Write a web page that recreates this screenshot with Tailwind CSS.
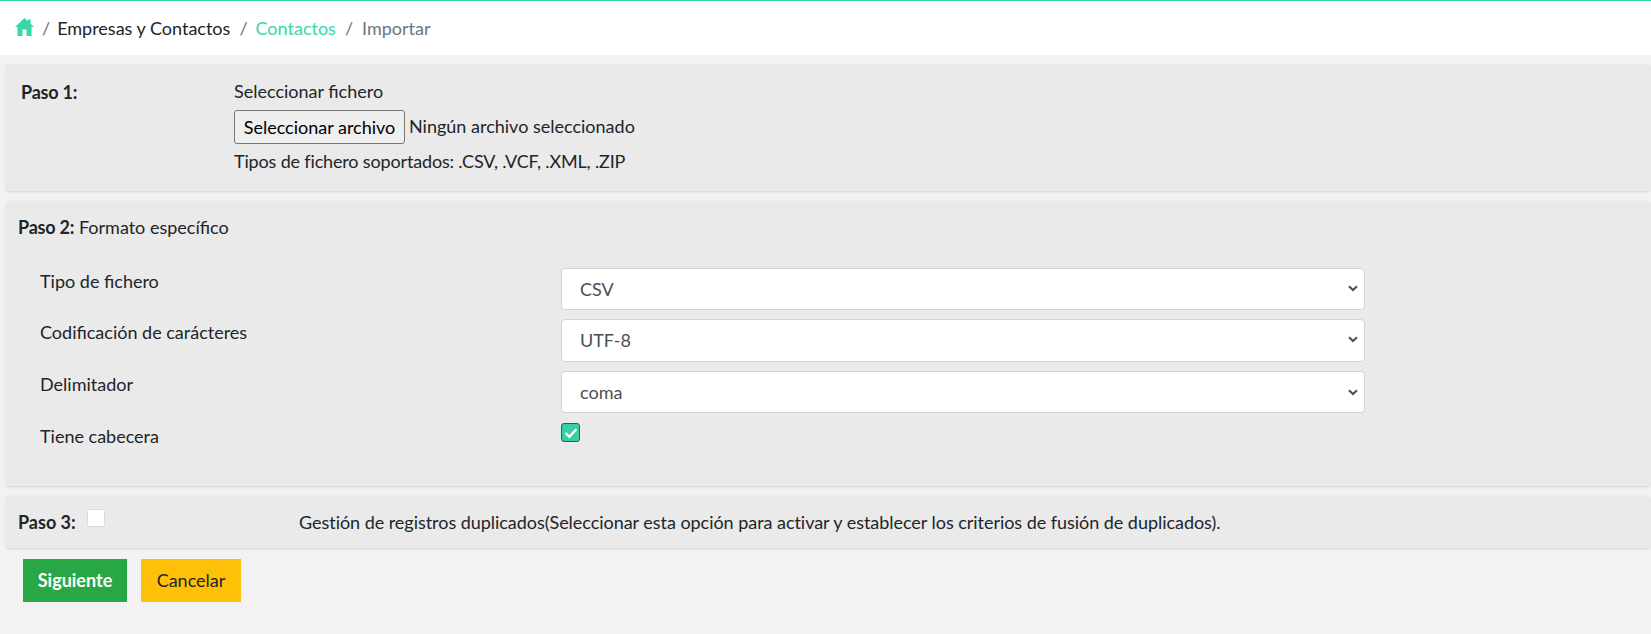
<!DOCTYPE html>
<html lang="es">
 <head>
  <meta charset="utf-8"/>
  <meta content="width=device-width, initial-scale=1.0" name="viewport"/>
  <title>Importar contactos</title>
  <script src="https://cdn.jsdelivr.net/npm/@tailwindcss/browser@4"></script>
 </head>
 <body class="font-['Lato',sans-serif] text-[18px] text-[#212529] bg-[#f2f2f2] h-[634px] overflow-hidden">
  <!-- breadcrumb -->
  <nav class="h-[55px] bg-white border-t border-[#38d6a9] flex items-center pl-[15px]">
   <svg class="w-[19px] h-[18px] text-[#38d6a9] -mt-[2px]" viewBox="0 0 19 18" fill="currentColor"><path d="M9.5 0 L13 3.2 V1.5 H15.5 V5.5 L19 9 H16.5 V18 H11.5 V11.5 H7.5 V18 H2.5 V9 H0 Z"/></svg>
   <span class="ml-[8px] mr-[8px] text-[#6c757d]">/</span>
   <a class="text-[#212529] -ml-[1px]">Empresas y Contactos</a>
   <span class="ml-[9px] mr-[8px] text-[#6c757d]">/</span>
   <a class="text-[#38d6a9]">Contactos</a>
   <span class="ml-[9px] mr-[9px] text-[#6c757d]">/</span>
   <span class="text-[#6c757d]">Importar</span>
  </nav>

  <main class="pt-[9px] pl-[6px] pr-[1px]">
   <!-- paso 1 -->
   <section class="h-[127px] bg-[#eaeaea] rounded-[2px] shadow-sm flex pt-[15px] pl-[15px]">
    <div class="w-[213px] font-bold tracking-[-0.2px]">Paso 1:</div>
    <div>
     <div class="h-[24px] leading-6">Seleccionar fichero</div>
     <div class="flex items-center mt-[7px]">
      <button class="h-[34px] w-[171px] bg-[#efefef] border border-[#767676] rounded-[3px] text-black" type="button">Seleccionar archivo</button>
      <span class="ml-[4px] -mt-[1px]">Ningún archivo seleccionado</span>
     </div>
     <div class="mt-[5px] leading-6 tracking-[-0.16px]">Tipos de fichero soportados: .CSV, .VCF, .XML, .ZIP</div>
    </div>
   </section>

   <!-- paso 2 -->
   <section class="h-[285px] mt-[10px] bg-[#eaeaea] rounded-[2px] shadow-sm pt-[14px] pl-[13px]">
    <div class="h-[24px] leading-6 -ml-[1px]"><b class="font-bold tracking-[-0.2px]">Paso 2:</b> Formato específico</div>
    <div class="mt-[29px] pl-[21px] flex flex-col">
     <div class="flex items-start h-[51px]">
      <label class="w-[521px] mt-[1px] leading-6">Tipo de fichero</label>
      <div class="relative w-[804px]">
       <select class="appearance-none w-full h-[42px] bg-white border border-[#ced4da] rounded-[4px] pl-[18px] text-[#495057]"><option>CSV</option></select>
       <svg class="absolute right-[7px] top-[17px] w-[10px] h-[7px] text-[#495057] pointer-events-none" viewBox="0 0 10 7" fill="none" stroke="currentColor" stroke-width="2"><path d="M1 1.2 L5 5 L9 1.2"/></svg>
      </div>
     </div>
     <div class="flex items-start h-[52px]">
      <label class="w-[521px] mt-[1px] leading-6">Codificación de carácteres</label>
      <div class="relative w-[804px]">
       <select class="appearance-none w-full h-[43px] bg-white border border-[#ced4da] rounded-[4px] pl-[18px] text-[#495057]"><option>UTF-8</option></select>
       <svg class="absolute right-[7px] top-[17px] w-[10px] h-[7px] text-[#495057] pointer-events-none" viewBox="0 0 10 7" fill="none" stroke="currentColor" stroke-width="2"><path d="M1 1.2 L5 5 L9 1.2"/></svg>
      </div>
     </div>
     <div class="flex items-start h-[53px]">
      <label class="w-[521px] mt-[1px] leading-6">Delimitador</label>
      <div class="relative w-[804px]">
       <select class="appearance-none w-full h-[42px] bg-white border border-[#ced4da] rounded-[4px] pl-[18px] text-[#495057]"><option>coma</option></select>
       <svg class="absolute right-[7px] top-[18px] w-[10px] h-[7px] text-[#495057] pointer-events-none" viewBox="0 0 10 7" fill="none" stroke="currentColor" stroke-width="2"><path d="M1 1.2 L5 5 L9 1.2"/></svg>
      </div>
     </div>
     <div class="flex items-start">
      <label class="w-[521px] leading-6">Tiene cabecera</label>
      <span class="w-[19px] h-[19px] -mt-[1px] flex items-center justify-center bg-[#38cfa4] border border-[#495057] rounded-[3px]">
       <svg class="w-[14px] h-[12px]" viewBox="0 0 13 11" fill="none" stroke="white" stroke-width="2.2"><path d="M1.5 5.5 L5 9 L11.5 2"/></svg>
      </span>
     </div>
    </div>
   </section>

   <!-- paso 3 -->
   <section class="h-[52px] mt-[10px] bg-[#eaeaea] rounded-[2px] shadow-sm flex items-start pl-[12px] pt-[14px]">
    <b class="font-bold leading-6 w-[69px]">Paso 3:</b>
    <span class="w-[18px] h-[18px] -mt-[1px] bg-white border border-[#dcdcdc] rounded-[3px]"></span>
    <span class="ml-[194px] leading-6 tracking-[-0.04px]">Gestión de registros duplicados(Seleccionar esta opción para activar y establecer los criterios de fusión de duplicados).</span>
   </section>

   <!-- acciones -->
   <div class="flex mt-[11px] ml-[17px] gap-[14px]">
    <button class="w-[104px] h-[43px] bg-[#28a745] text-white font-bold" type="button">Siguiente</button>
    <button class="w-[100px] h-[43px] bg-[#ffc107] text-[#212529]" type="button">Cancelar</button>
   </div>
  </main>
 </body>
</html>
